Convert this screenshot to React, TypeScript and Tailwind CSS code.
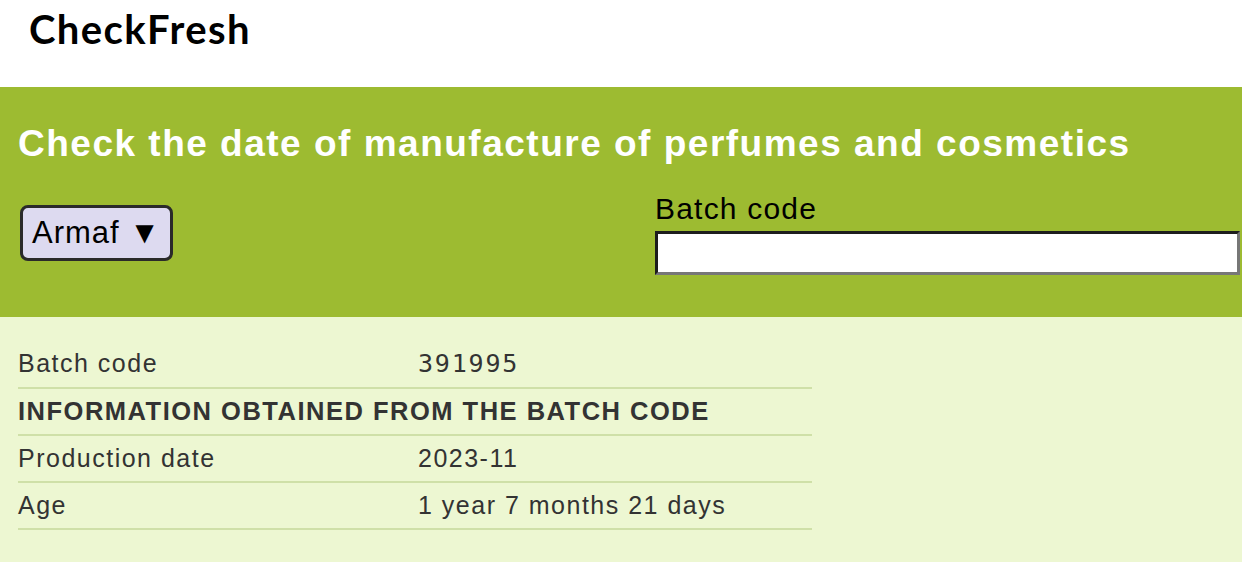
import { useState } from "react";

const rows = [
  { label: "Production date", value: "2023-11" },
  { label: "Age", value: "1 year 7 months 21 days" },
];

export default function App() {
  const [batch, setBatch] = useState("");

  return (
    <div className="min-h-[562px] bg-[#edf7d2] font-['Liberation_Sans',Arial,sans-serif]">
      {/* Header */}
      <header className="h-[87px] bg-white pl-[29px] pt-[9px]">
        <h1 className="text-[40px] font-bold leading-[40px] tracking-[1.4px] text-black font-['Lato',sans-serif]">
          CheckFresh
        </h1>
      </header>

      {/* Search band */}
      <section className="h-[230px] bg-[#9dbb31] px-[18px] pt-[35px]">
        <h2 className="text-[37px] font-bold leading-[44px] tracking-[1.5px] text-white">
          Check the date of manufacture of perfumes and cosmetics
        </h2>
        <div className="mt-[26px] -mr-[16px] flex items-start">
          <div className="w-[637px] shrink-0 pt-[13px] pl-[2px]">
            <button className="flex h-[56px] items-center rounded-[8px] border-[3px] border-[#2a2a2a] bg-[#dddaf0] pl-[9px] pr-[9px] text-[31px] tracking-[1px] text-black">
              Armaf ▼
            </button>
          </div>
          <div className="w-[585px] shrink-0">
            <label htmlFor="batch" className="block text-[30px] leading-[34px] tracking-[1.2px] text-black">
              Batch code
            </label>
            <input
              id="batch"
              value={batch}
              onChange={(e) => setBatch(e.target.value)}
              className="mt-[5px] h-[44px] w-full border-[3px] border-t-[#1d1d1d] border-l-[#1d1d1d] border-b-[#777] border-r-[#777] bg-white px-2 text-[24px] outline-none"
            />
          </div>
        </div>
      </section>

      {/* Result table */}
      <section className="px-[18px] pt-[24px]">
        <table className="w-[794px] border-collapse text-[25px] tracking-[1.5px] text-[#333]">
          <tbody>
            <tr className="h-[47px] border-b-2 border-[#cfe0a8]">
              <td className="w-[400px]">Batch code</td>
              <td className="font-['DejaVu_Sans_Mono',monospace] tracking-[1.8px]">391995</td>
            </tr>
            <tr className="h-[47px] border-b-2 border-[#cfe0a8]">
              <td colSpan={2} className="text-[25.5px] font-bold">
                INFORMATION OBTAINED FROM THE BATCH CODE
              </td>
            </tr>
            {rows.map((r) => (
              <tr key={r.label} className="h-[47px] border-b-2 border-[#cfe0a8]">
                <td>{r.label}</td>
                <td>{r.value}</td>
              </tr>
            ))}
          </tbody>
        </table>
      </section>
    </div>
  );
}
